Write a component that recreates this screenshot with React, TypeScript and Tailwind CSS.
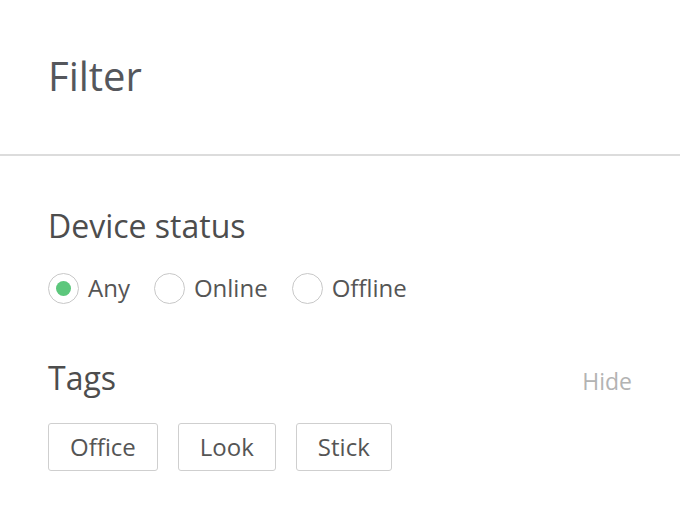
import React, { useState } from 'react';

const statuses = ['Any', 'Online', 'Offline'];
const tags = ['Office', 'Look', 'Stick'];

function Radio({ label, checked, onSelect }: { label: string; checked: boolean; onSelect: () => void }) {
  return (
    <label className="flex items-center gap-[9px] cursor-pointer" onClick={onSelect}>
      <span className="w-[31px] h-[31px] rounded-full border-[1.5px] border-[#c8c8c8] flex items-center justify-center">
        {checked && <span className="w-[15px] h-[15px] rounded-full bg-[#5cc77c]" />}
      </span>
      <span className="text-[24px] text-[#555]">{label}</span>
    </label>
  );
}

export default function App() {
  const [status, setStatus] = useState('Any');

  return (
    <div className="w-[680px] h-[522px] overflow-hidden bg-white font-['Open_Sans',sans-serif] text-[#555]">
      {/* Header */}
      <div className="h-[156px] border-b-2 border-[#dcdcdc] px-[48px] pt-[48px]">
        <h1 className="text-[40px] leading-[56px] text-[#55575c]">Filter</h1>
      </div>

      <div className="px-[48px] pt-[48px]">
        {/* Device status */}
        <h2 className="text-[32px] leading-[44px] text-[#4d4d4d]">Device status</h2>
        <div className="mt-[22px] flex items-center gap-[24px]">
          {statuses.map((s) => (
            <Radio key={s} label={s} checked={status === s} onSelect={() => setStatus(s)} />
          ))}
        </div>

        {/* Tags */}
        <div className="mt-[50px] flex items-baseline justify-between">
          <h2 className="text-[32px] leading-[44px] text-[#4d4d4d]">Tags</h2>
          <button className="text-[23px] text-[#b3b3b3]">Hide</button>
        </div>
        <div className="mt-[23px] flex gap-[20px]">
          {tags.map((t) => (
            <button
              key={t}
              className="h-[48px] px-[21px] border-[1.5px] border-[#cfcfcf] rounded-[3px] text-[24px] text-[#555]"
            >
              {t}
            </button>
          ))}
        </div>
      </div>
    </div>
  );
}
